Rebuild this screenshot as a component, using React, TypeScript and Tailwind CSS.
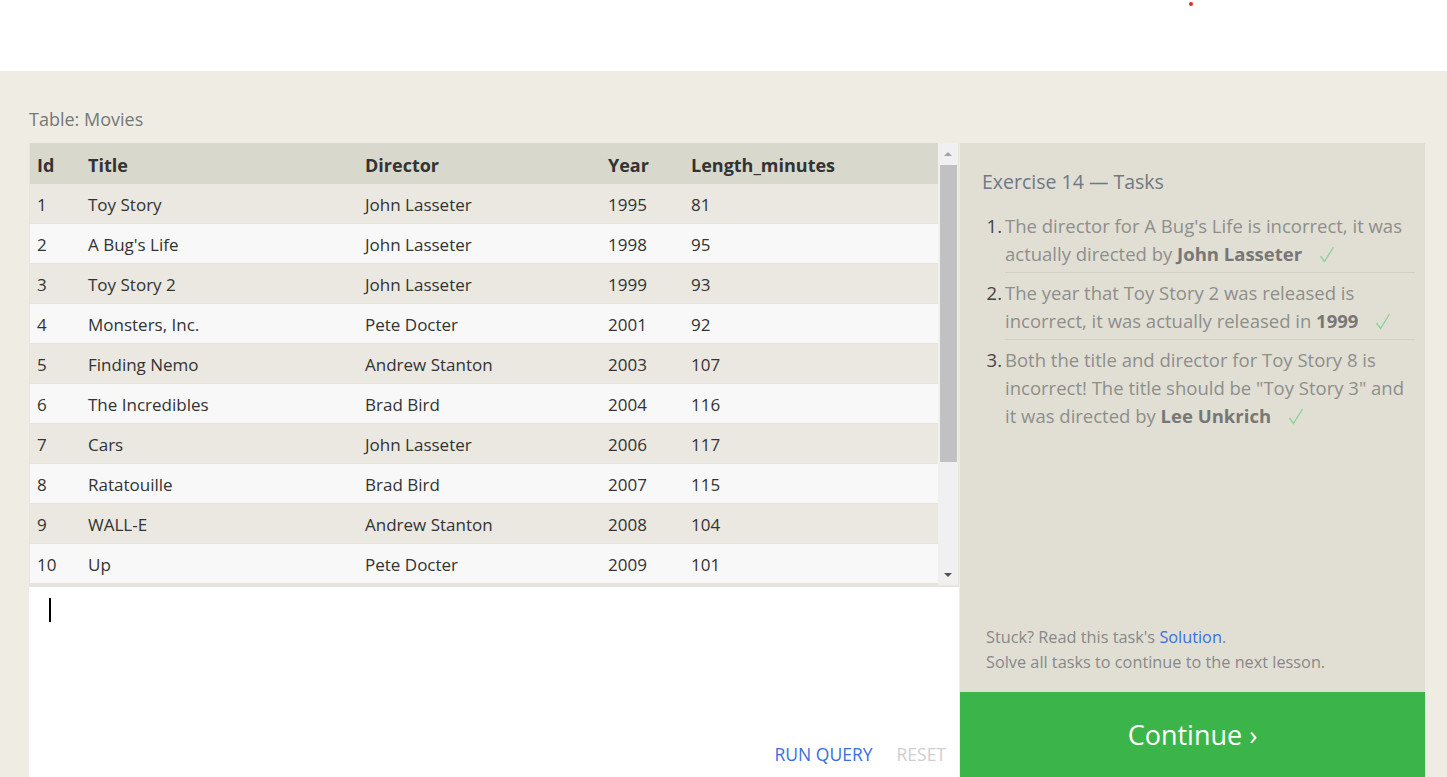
import React from "react";

const movies = [
  [1, "Toy Story", "John Lasseter", 1995, 81],
  [2, "A Bug's Life", "John Lasseter", 1998, 95],
  [3, "Toy Story 2", "John Lasseter", 1999, 93],
  [4, "Monsters, Inc.", "Pete Docter", 2001, 92],
  [5, "Finding Nemo", "Andrew Stanton", 2003, 107],
  [6, "The Incredibles", "Brad Bird", 2004, 116],
  [7, "Cars", "John Lasseter", 2006, 117],
  [8, "Ratatouille", "Brad Bird", 2007, 115],
  [9, "WALL-E", "Andrew Stanton", 2008, 104],
  [10, "Up", "Pete Docter", 2009, 101],
];

function Check() {
  return (
    <svg width="16" height="17" viewBox="0 0 16 17" className="inline-block ml-[17px] align-[-2px]">
      <path d="M1.5 10 L5.5 15.5 L14.5 1" fill="none" stroke="#8cd296" strokeWidth="1.3" />
    </svg>
  );
}

function Task({ n, last, children }: { n: number; last?: boolean; children: React.ReactNode }) {
  return (
    <li className="flex">
      <span className="w-[23px] shrink-0 text-[#444] text-right pr-[3px] pt-[6px]">{n}.</span>
      <span className={`flex-1 pt-[6px] pb-[4px] ${last ? "" : "border-b border-[#d2d0c6]"}`}>{children}</span>
    </li>
  );
}

export default function App() {
  return (
    <div className="w-[1447px] h-[777px] overflow-hidden bg-[#efece4] font-['Open_Sans',sans-serif]">
      {/* top bar */}
      <div className="relative h-[71px] bg-white">
        <span className="absolute left-[1189px] top-[2px] w-[4px] h-[4px] rounded-full bg-[#e32b2b]" />
      </div>

      <div className="pl-[29px] pt-[35px]">
        <div className="text-[18px] text-[#777] leading-[26px] mb-[11px]">Table: Movies</div>

        <div className="flex">
          {/* left column */}
          <div className="w-[930px] flex flex-col">
            <div className="flex h-[444px] bg-[#e6e4dc]">
              <div className="w-[909px] pl-px">
                <div className="flex h-[41px] items-center bg-[#d9d8cc] text-[18px] font-bold text-[#333] pt-[3px]">
                  <div className="w-[58px] pl-[7px]">Id</div>
                  <div className="w-[277px]">Title</div>
                  <div className="w-[243px]">Director</div>
                  <div className="w-[83px]">Year</div>
                  <div>Length_minutes</div>
                </div>
                {movies.map((m, i) => (
                  <div
                    key={i}
                    className={`flex h-[39px] items-center mb-px text-[17px] text-[#333] pt-[3px] ${
                      i % 2 === 0 ? "bg-[#eae8e0]" : "bg-[#f8f8f8]"
                    }`}
                  >
                    <div className="w-[58px] pl-[7px]">{m[0]}</div>
                    <div className="w-[277px]">{m[1]}</div>
                    <div className="w-[243px]">{m[2]}</div>
                    <div className="w-[83px]">{m[3]}</div>
                    <div>{m[4]}</div>
                  </div>
                ))}
              </div>
              {/* scrollbar */}
              <div className="w-[20px] h-[442px] bg-[#f0f0f0] flex flex-col items-center">
                <svg width="10" height="20" viewBox="0 0 10 20" className="mt-[2px]">
                  <path d="M1 11 L5 7 L9 11 Z" fill="#a3a3a3" />
                </svg>
                <div className="w-[17px] h-[297px] bg-[#c1c1c1] ml-px" />
                <div className="flex-1" />
                <svg width="10" height="16" viewBox="0 0 10 16" className="mb-[2px]">
                  <path d="M1 6 L9 6 L5 10 Z" fill="#505050" />
                </svg>
              </div>
            </div>
            {/* editor */}
            <div className="relative h-[190px] bg-white">
              <div className="absolute left-[20px] top-[11px] w-[2px] h-[24px] bg-black" />
              <div className="absolute right-[13px] bottom-[10px] flex gap-[24px] text-[17.5px]">
                <span className="text-[#3b6fe0]">RUN QUERY</span>
                <span className="text-[#cfcfcf]">RESET</span>
              </div>
            </div>
          </div>

          {/* right column */}
          <div className="w-[465px] ml-px flex flex-col h-[634px]">
            <div className="flex-1 bg-[#e1dfd4] pl-[22px] pr-[10px] pt-[25px] flex flex-col">
              <div className="text-[19.5px] text-[#6e7886] leading-[28px] mb-[10px]">Exercise 14 — Tasks</div>
              <ol className="text-[18.5px] leading-[28px] text-[#8e8e8c]">
                <Task n={1}>
                  The director for A Bug's Life is incorrect, it was actually directed by{" "}
                  <b className="text-[#777]">John Lasseter</b>
                  <Check />
                </Task>
                <Task n={2}>
                  The year that Toy Story 2 was released is incorrect, it was actually released in{" "}
                  <b className="text-[#777]">1999</b>
                  <Check />
                </Task>
                <Task n={3} last>
                  Both the title and director for Toy Story 8 is incorrect! The title should be "Toy Story 3" and it was
                  directed by <b className="text-[#777]">Lee Unkrich</b>
                  <Check />
                </Task>
              </ol>
              <div className="flex-1" />
              <div className="text-[16.3px] leading-[25px] text-[#888] pl-[4px] pb-[17px]">
                <div>
                  Stuck? Read this task's <span className="text-[#3b6fe0]">Solution</span>.
                </div>
                <div>Solve all tasks to continue to the next lesson.</div>
              </div>
            </div>
            <div className="h-[85px] bg-[#3bb54a] flex items-center justify-center text-white text-[27px] pt-[2px]">
              Continue ›
            </div>
          </div>
        </div>
      </div>
    </div>
  );
}
